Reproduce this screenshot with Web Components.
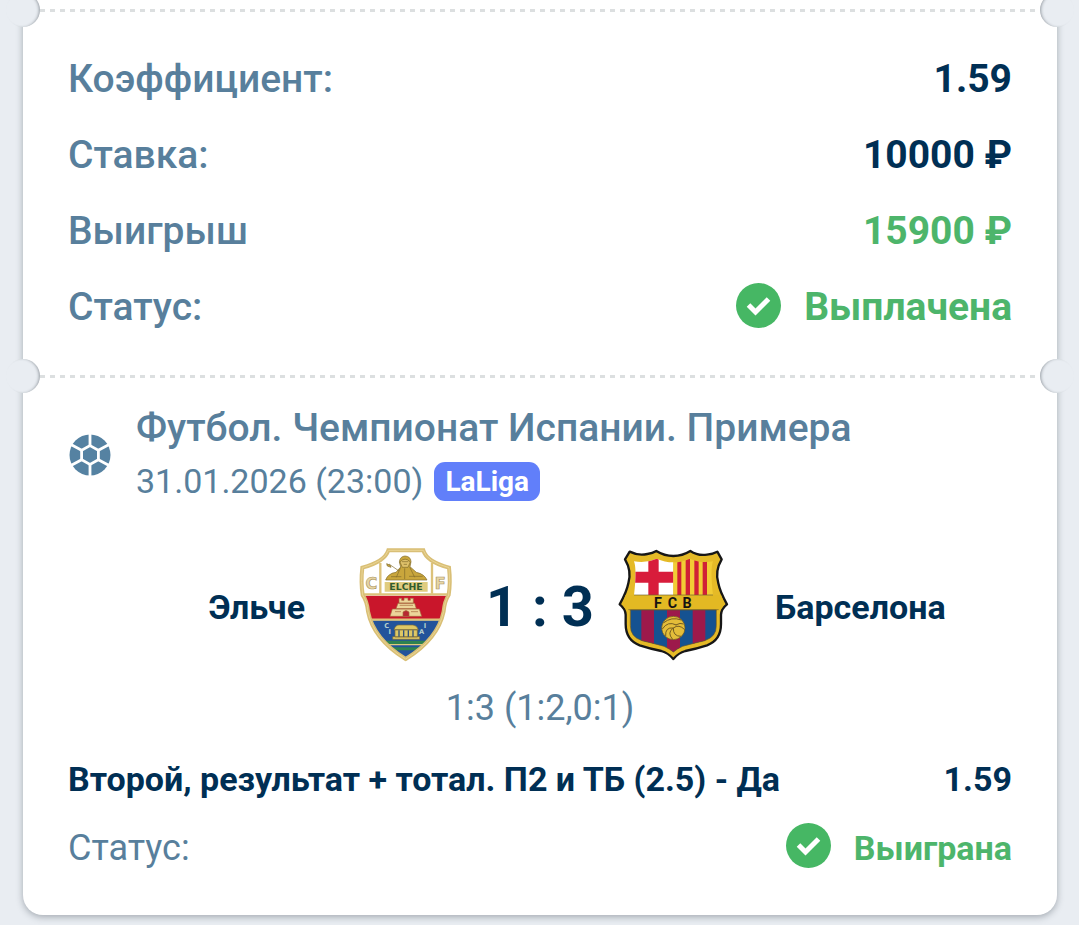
<!DOCTYPE html>
<html lang="ru">
<head>
<meta charset="utf-8">
<meta name="viewport" content="width=device-width, initial-scale=1">
<title>Купон</title>
<style>
  body {
    display: flow-root;
    min-height: 100vh;
    margin: 0;
    background: #e9edf2;
    font-family: Roboto, "Liberation Sans", sans-serif;
    --muted: #587f9c;
    --dark: #002f54;
    --green: #4db56b;
    color: var(--dark);
  }
</style>
</head>
<body>
<bet-ticket>
  <ticket-divider></ticket-divider>
  <ticket-section>
    <bet-row label="Коэффициент:">1.59</bet-row>
    <bet-row label="Ставка:">10000 ₽</bet-row>
    <bet-row label="Выигрыш" class="win">15900 ₽</bet-row>
    <bet-row label="Статус:" class="win"><check-icon slot="icon"></check-icon>Выплачена</bet-row>
  </ticket-section>
  <ticket-divider></ticket-divider>
  <match-head>
    <span slot="title">Футбол. Чемпионат Испании. Примера</span>
    <span slot="date">31.01.2026 (23:00)</span>
    <span slot="badge">LaLiga</span>
  </match-head>
  <match-score>
    <span slot="home">Эльче</span>
    <crest-elche slot="home-crest"></crest-elche>
    <span slot="score">1 : 3</span>
    <crest-barcelona slot="away-crest"></crest-barcelona>
    <span slot="away">Барселона</span>
    <span slot="periods">1:3 (1:2,0:1)</span>
  </match-score>
  <bet-row class="small outcome" label="Второй, результат + тотал. П2 и ТБ (2.5) - Да">1.59</bet-row>
  <bet-row class="small win" label="Статус:"><check-icon slot="icon"></check-icon>Выиграна</bet-row>
</bet-ticket>

<script>
class BaseElement extends HTMLElement {
  constructor() {
    super();
    this.attachShadow({ mode: 'open' });
  }
  connectedCallback() {
    this.shadowRoot.innerHTML = this.render();
  }
}

class BetTicket extends BaseElement {
  render() {
    return `
      <style>
        :host {
          display: block;
          box-sizing: border-box;
          margin: -7px 22px 0 23px;
          padding-bottom: 33px;
          background: #fff;
          border-radius: 0 0 20px 20px;
          box-shadow: 0 2px 7px rgb(40 50 60 / 36%);
        }
      </style>
      <slot></slot>
    `;
  }
}

class TicketDivider extends BaseElement {
  render() {
    return `
      <style>
        :host {
          display: flex;
          align-items: center;
          margin: 0 -17px;
        }
        i {
          flex: none;
          width: 34px;
          height: 34px;
          border-radius: 50%;
          background: #e9edf2;
        }
        .left { box-shadow: inset -2px 0 3px -1px rgb(40 50 60 / 42%); }
        .right { box-shadow: inset 2px 0 3px -1px rgb(40 50 60 / 42%); }
        .line {
          flex: 1;
          height: 3px;
          background: repeating-linear-gradient(90deg, #dcdfe0 0 5px, transparent 5px 10px);
        }
      </style>
      <i class="left"></i><div class="line"></div><i class="right"></i>
    `;
  }
}

class TicketSection extends BaseElement {
  render() {
    return `
      <style>
        :host { display: block; padding: 14px 0; }
      </style>
      <slot></slot>
    `;
  }
}

class BetRow extends BaseElement {
  render() {
    return `
      <style>
        :host {
          display: flex;
          align-items: center;
          justify-content: space-between;
          height: 76px;
          padding: 0 45px;
          font-size: 39px;
        }
        .label { color: var(--muted); font-weight: 500; }
        .value {
          display: flex;
          align-items: center;
          gap: 23px;
          font-weight: 700;
        }
        :host(.small) { height: 69px; font-size: 34px; }
        :host(.small) .label { font-size: 36px; font-weight: 400; }
        :host(.outcome) .label { color: var(--dark); font-size: 34px; font-weight: 700; }
        :host(.win) .value { color: var(--green); }
      </style>
      <span class="label">${this.getAttribute('label')}</span>
      <span class="value"><slot name="icon"></slot><span><slot></slot></span></span>
    `;
  }
}

class CheckIcon extends BaseElement {
  render() {
    return `
      <style>
        :host { display: block; padding-bottom: 4px; }
        svg { display: block; }
      </style>
      <svg width="45" height="45" viewBox="0 0 45 45" aria-hidden="true">
        <circle cx="22.5" cy="22.5" r="22.5" fill="#46b764"/>
        <path d="M12.5 22 19.5 29 32.5 16" fill="none" stroke="#fff" stroke-width="5"/>
      </svg>
    `;
  }
}

class MatchHead extends BaseElement {
  render() {
    return `
      <style>
        :host {
          display: flex;
          align-items: center;
          gap: 24px;
          padding: 9px 45px 0;
          color: var(--muted);
        }
        svg { flex: none; display: block; }
        .title { font-size: 39px; line-height: 52px; font-weight: 500; }
        .date {
          display: flex;
          align-items: center;
          gap: 11px;
          height: 54px;
          font-size: 34px;
        }
        .badge {
          padding: 0 11px;
          border-radius: 11px;
          background: #617ffa;
          color: #fff;
          font-size: 28px;
          line-height: 39px;
          font-weight: 700;
        }
      </style>
      <svg width="44" height="44" viewBox="0 0 44 44" aria-hidden="true">
        <circle cx="22" cy="22" r="20.5" fill="#5582a2"/>
        <g fill="none" stroke="#fff" stroke-width="2.8">
          <path d="M22 12.6 30.4 17.3V26.7L22 31.4 13.6 26.7V17.3Z"/>
          <path d="M22 0V12.6M22 31.4V44M30.4 17.3 42 11M30.4 26.7 42 33M13.6 17.3 2 11M13.6 26.7 2 33"/>
        </g>
      </svg>
      <div>
        <div class="title"><slot name="title"></slot></div>
        <div class="date">
          <slot name="date"></slot>
          <span class="badge"><slot name="badge"></slot></span>
        </div>
      </div>
    `;
  }
}

class MatchScore extends BaseElement {
  render() {
    return `
      <style>
        :host { display: block; padding: 34px 45px 0; }
        .teams {
          display: grid;
          grid-template-columns: 1fr 120px 148px 120px 1fr;
          align-items: center;
          font-size: 34px;
          font-weight: 700;
        }
        .home { padding-right: 41px; text-align: right; }
        .away { padding-left: 41px; }
        .score { font-size: 56px; text-align: center; }
        .periods {
          color: var(--muted);
          font-size: 36px;
          line-height: 72px;
          text-align: center;
        }
      </style>
      <div class="teams">
        <div class="home"><slot name="home"></slot></div>
        <slot name="home-crest"></slot>
        <div class="score"><slot name="score"></slot></div>
        <slot name="away-crest"></slot>
        <div class="away"><slot name="away"></slot></div>
      </div>
      <div class="periods"><slot name="periods"></slot></div>
    `;
  }
}

class CrestElche extends BaseElement {
  render() {
    const shield = 'M131 32H236Q246 66 313 84Q318 126 312 166Q300 184 297 215Q280 298 183 358Q86 298 70 215Q67 184 54 166Q48 126 53 84Q120 66 131 32Z';
    return `
      <style>
        :host, svg { display: block; }
        text { font-family: "DejaVu Sans", sans-serif; font-weight: 700; }
      </style>
      <svg width="120" height="130" viewBox="4 7 360 390" role="img" aria-label="Эльче">
        <defs><clipPath id="shield"><path d="${shield}"/></clipPath></defs>
        <g clip-path="url(#shield)">
          <path d="M40 20H330V370H40Z" fill="#fff"/>
          <path d="M40 168H330V240H40Z" fill="#c9162b"/>
          <path d="M40 242H330V370H40Z" fill="#23539b"/>
          <path d="M40 303H330V313H40ZM40 323H330V332H40Z" fill="#2d8250"/>
          <path d="M40 313H330V317H40Z" fill="#dfca7d"/>
          <path d="M50 164H318M60 240H308" stroke="#dcc27a" stroke-width="7"/>
          <path d="M107 70V162M262 70V162" stroke="#dcc27a" stroke-width="7"/>
        </g>
        <g fill="#c9a63c" stroke="#80692a" stroke-width="2">
          <path d="M123 121Q130 101 154 98L168 82L164 67Q166 50 181 49Q198 50 199 66L196 81L215 98Q239 103 247 121Z"/>
          <path d="M166 67Q181 50 197 67L190 83H173Z" fill="#dfc16a"/>
          <path d="M133 73 163 94M168 83 155 113M195 82 210 113M180 86V118M139 111H170M193 110H234M172 66H191M177 74H187" fill="none"/>
          <path d="M126 72 137 77 139 83 128 79Z"/>
        </g>
        <path d="M120 127H249V156H120Z" fill="#e0cc80"/>
        <text x="184" y="151" text-anchor="middle" font-size="28" fill="#315b2e">ELCHE</text>
        <g fill="#e7d6a6" stroke="#ab955b" stroke-width="2">
          <text x="80" y="148" text-anchor="middle" font-size="48">C</text>
          <text x="287" y="148" text-anchor="middle" font-size="48">F</text>
        </g>
        <g fill="#ecd59a" stroke="#a6663c" stroke-width="2">
          <path d="M163 176H171V182H178V175H190V182H197V176H206V190H163ZM160 191H210L215 207H154ZM143 208H224L231 230H136Z"/>
          <path d="M175 230V217Q184 208 193 217V230Z" fill="#b62832"/>
          <path d="M165 197H205M151 216H169M199 216H220" fill="none"/>
        </g>
        <g fill="#dec765" stroke="#7b6b36" stroke-width="2">
          <path d="M148 270Q153 254 165 256H205Q217 257 221 270Z"/>
          <path d="M151 271H218V292H151ZM144 291H225V299H144Z"/>
          <path d="M163 272V291M177 272V291M191 272V291M205 272V291" fill="none" stroke="#31517a" stroke-width="4"/>
        </g>
        <g fill="#b7d1ce" font-size="20" text-anchor="middle">
          <text x="126" y="266">C</text><text x="135" y="284">I</text>
          <text x="241" y="266">I</text><text x="231" y="284">A</text>
        </g>
        <path d="${shield}" fill="none" stroke="#d9bf76" stroke-width="12"/>
        <path d="${shield}" fill="none" stroke="#ead595" stroke-width="3"/>
      </svg>
    `;
  }
}

class CrestBarcelona extends BaseElement {
  render() {
    const outline = 'M52 36Q78 49 105 43Q121 41 132 34Q156 49 183 49Q210 49 234 34Q256 49 284 45Q302 43 315 36L328 59Q307 94 318 131Q323 157 344 194Q327 207 326 225V253Q326 301 284 317Q250 328 219 334Q198 340 183 358Q168 340 147 334Q116 328 82 317Q40 301 40 253V225Q39 207 22 194Q43 157 48 131Q59 94 38 59Z';
    return `
      <style>
        :host, svg { display: block; }
        text { font-family: Roboto, sans-serif; font-weight: 700; }
      </style>
      <svg width="120" height="130" viewBox="5 7 360 390" role="img" aria-label="Барселона">
        <defs>
          <clipPath id="top"><path d="M65 65Q101 72 133 57Q157 68 183 68Q209 68 233 57Q265 72 302 65Q293 91 302 166H65Q74 91 65 65Z"/></clipPath>
          <clipPath id="bottom"><path d="M54 211H312V258Q312 292 277 303Q227 315 211 320Q193 328 183 337Q173 328 155 320Q139 315 89 303Q54 292 54 258Z"/></clipPath>
        </defs>
        <path d="${outline}" fill="#e5ba27" stroke="#171717" stroke-width="7" stroke-linejoin="round"/>
        <g clip-path="url(#top)">
          <path d="M60 50H183V170H60Z" fill="#fff"/>
          <path d="M108 50H139V170H108ZM60 96H183V129H60Z" fill="#d81c3b"/>
          <path d="M183 50H310V170H183Z" fill="#f2cc35"/>
          <path d="M195 50H207V170H195ZM220 50H233V170H220ZM246 50H259V170H246ZM271 50H284V170H271Z" fill="#d02036"/>
        </g>
        <path d="M40 166H326L337 194 324 211H42L29 194Z" fill="#e3b923"/>
        <path d="M65 166H302M48 210H319" stroke="#6e6030" stroke-width="2"/>
        <g font-size="43" fill="#151512" text-anchor="middle">
          <text x="137" y="204">F</text><text x="180" y="204">C</text><text x="224" y="204">B</text>
        </g>
        <g clip-path="url(#bottom)">
          <path d="M45 211H320V340H45Z" fill="#155291"/>
          <path d="M87 211H125V340H87ZM164 211H203V340H164ZM241 211H279V340H241Z" fill="#9d194b"/>
        </g>
        <path d="M54 211H312V258Q312 292 277 303Q227 315 211 320Q193 328 183 337Q173 328 155 320Q139 315 89 303Q54 292 54 258Z" fill="none" stroke="#675527" stroke-width="2"/>
        <circle cx="183" cy="265" r="35" fill="#e4bd39" stroke="#604e20" stroke-width="2"/>
        <path d="M153 250Q177 230 207 241M150 268Q166 243 192 256M160 289Q158 262 183 265M181 299Q163 279 183 265M206 290Q182 290 183 265M217 270Q200 252 183 265M190 256Q204 248 214 253" fill="none" stroke="#745d22" stroke-width="3"/>
      </svg>
    `;
  }
}

customElements.define('bet-ticket', BetTicket);
customElements.define('ticket-divider', TicketDivider);
customElements.define('ticket-section', TicketSection);
customElements.define('bet-row', BetRow);
customElements.define('check-icon', CheckIcon);
customElements.define('match-head', MatchHead);
customElements.define('match-score', MatchScore);
customElements.define('crest-elche', CrestElche);
customElements.define('crest-barcelona', CrestBarcelona);
</script>
</body>
</html>
